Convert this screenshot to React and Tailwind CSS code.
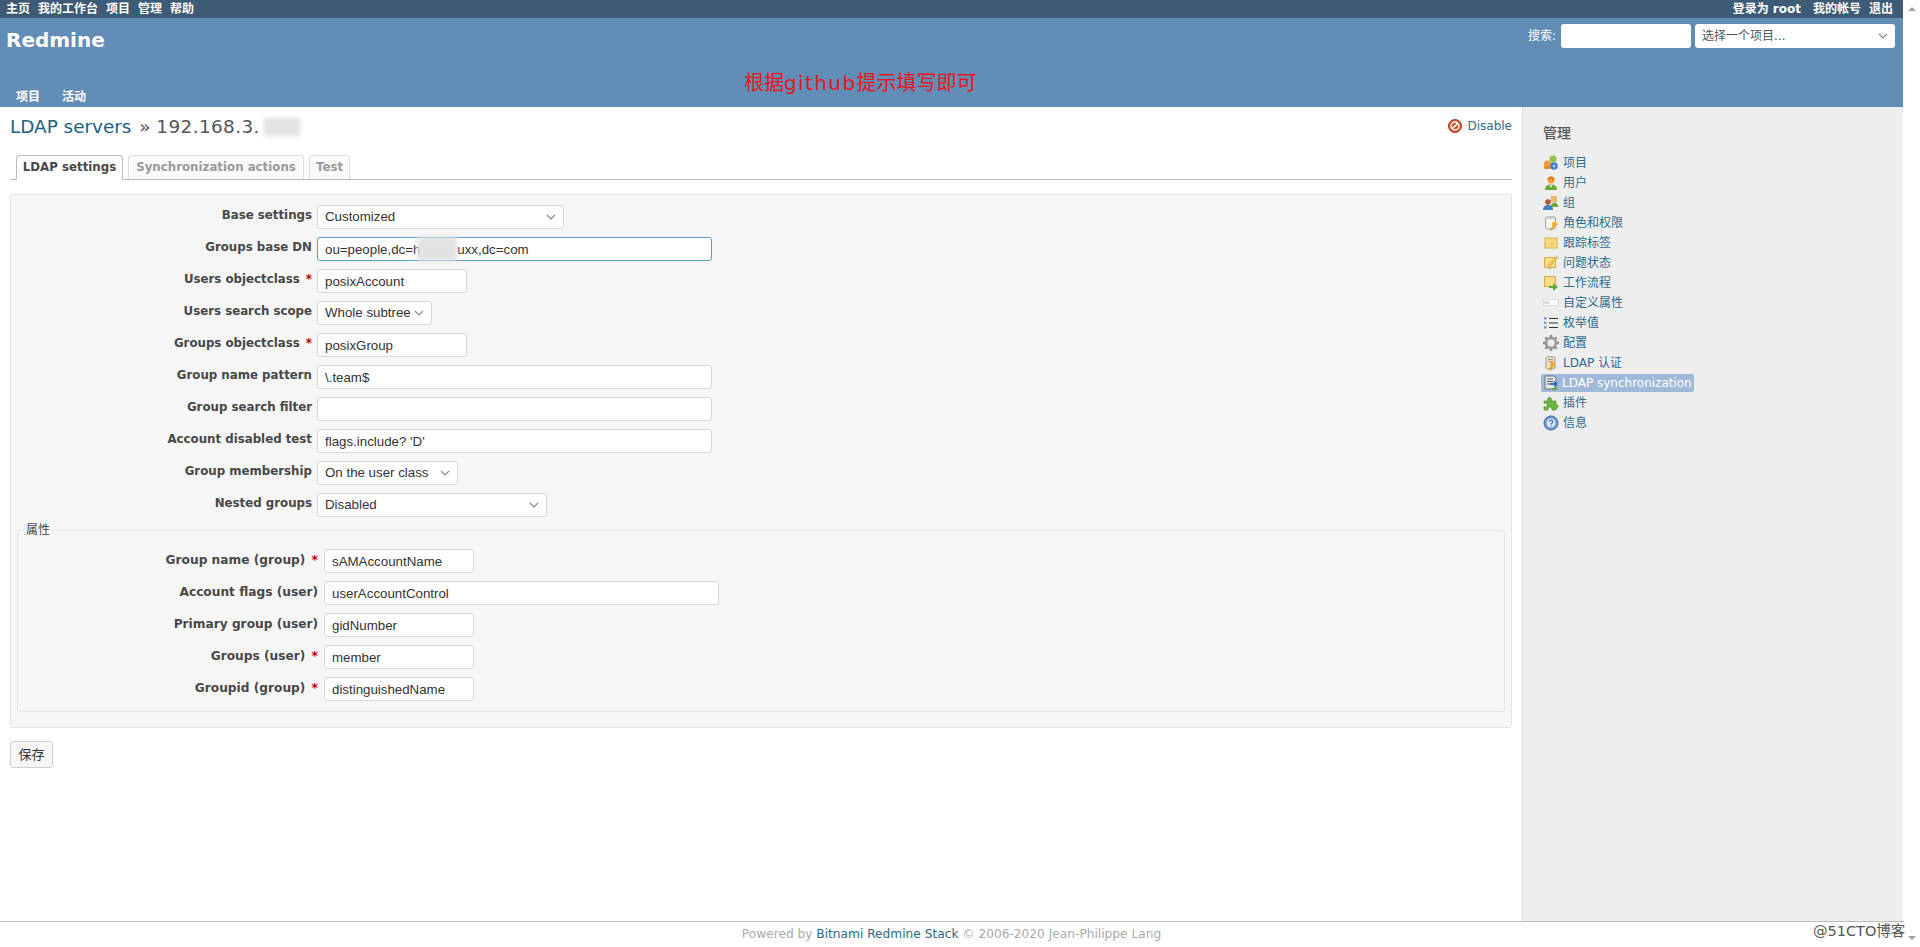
import React from "react";

const SANS = "font-['DejaVu_Sans','Noto_Sans_CJK_SC',sans-serif]";

const I = {
  project: (
    <>
      <circle cx="4.5" cy="9" r="3.6" fill="#ef9a3c" />
      <rect x="1" y="11" width="7" height="3" rx="1" fill="#e98a2a" />
      <circle cx="10" cy="4" r="3.6" fill="#8cc63f" />
      <circle cx="11" cy="11" r="3.8" fill="#3f7fd6" />
      <circle cx="11" cy="11" r="1.2" fill="#bcd6f5" />
    </>
  ),
  user: (
    <>
      <path d="M2 15c0-4 2.500-5.500 6-5.500s6 1.500 6 5.500z" fill="#6fa63a" />
      <path d="M6.500 10l1.500 3 1.500-3z" fill="#e8f3d6" />
      <circle cx="8" cy="5" r="3.500" fill="#f3a53c" />
      <path d="M4.500 5a3.500 3.500 0 0 1 7 0c-2 0-3-1-3.500-1.500C7.500 4 6.500 5 4.500 5z" fill="#d87a1c" />
    </>
  ),
  group: (
    <>
      <rect x="8" y="1" width="6" height="6" fill="#e8b66c" />
      <path d="M8 12c0-3 1.500-4.500 3.500-4.500S15 9 15 12z" fill="#6fa63a" />
      <circle cx="5" cy="7" r="2.800" fill="#b5532a" />
      <path d="M0 15c0-3.500 2-5 5-5s5 1.500 5 5z" fill="#3f7fc6" />
    </>
  ),
  role: (
    <>
      <path d="M2.500 2.500C2.500 1.500 12.500 1.500 12.500 2.500V13C12.500 14.500 2.500 14.500 2.500 13z" fill="#f4f4f4" stroke="#a5a5a5" />
      <ellipse cx="7.500" cy="3" rx="4.500" ry="1.200" fill="#cfcfcf" />
      <circle cx="11.500" cy="9" r="2.600" fill="#eeb135" />
      <path d="M10.500 10.500L6.500 15l2 .5 3.500-4z" fill="#e09e22" />
    </>
  ),
  tracker: (
    <>
      <rect x="2" y="3" width="12" height="10" fill="#f8dc84" stroke="#d8a94e" />
      <path d="M6 10l4-4M8 11l3-3" stroke="#eab84a" />
    </>
  ),
  status: (
    <>
      <rect x="1.500" y="2.500" width="11" height="10" fill="#f8dc84" stroke="#d8a94e" />
      <path d="M13.500 1.500l1.500 1.500-7 7-2.500 1 1-2.500z" fill="#f5c65d" stroke="#c99434" strokeWidth=".6" />
      <path d="M5 14l3-2.500 1.500 2z" fill="#e0a93f" />
    </>
  ),
  workflow: (
    <>
      <rect x="1.500" y="1.500" width="11" height="10" fill="#f8dc84" stroke="#d8a94e" />
      <path d="M6 11h4V8l5 4-5 4v-3H6z" fill="#5fa83a" />
    </>
  ),
  custom: (
    <>
      <rect x="0.500" y="4.500" width="15" height="6" fill="#fff" stroke="#d9d9d9" />
      <path d="M2 6v3M4 6v3M6 6v3" stroke="#bdbdbd" />
    </>
  ),
  enum: (
    <>
      <rect x="1" y="2" width="2.500" height="2.500" fill="#7e9cc4" />
      <rect x="1" y="6.500" width="2.500" height="2.500" fill="#7e9cc4" />
      <rect x="1" y="11" width="2.500" height="2.500" fill="#7e9cc4" />
      <path d="M6 3.500h9M6 8h9M6 12.500h9" stroke="#333" strokeWidth="1.200" />
    </>
  ),
  gear: (
    <>
      <circle cx="8" cy="8" r="5" fill="none" stroke="#a3a3a3" strokeWidth="3" />
      <path d="M8 0v3M8 13v3M0 8h3M13 8h3M2.300 2.300l2.200 2.200M11.500 11.500l2.200 2.200M13.700 2.300l-2.200 2.200M4.500 11.500l-2.200 2.200" stroke="#8f8f8f" strokeWidth="2.400" />
      <circle cx="8" cy="8" r="2.200" fill="#eee" />
    </>
  ),
  ldap: (
    <>
      <path d="M3 2.500C3 1.500 12 1.500 12 2.500V13C12 14.500 3 14.500 3 13z" fill="#e9e0c6" stroke="#a39a80" />
      <path d="M5 4.500h5M5 6.500h5" stroke="#999" />
      <circle cx="9.500" cy="9" r="2.600" fill="#eeb135" />
      <path d="M8.500 10.500L5.500 15l2 .5 3-4z" fill="#e09e22" />
    </>
  ),
  sync: (
    <>
      <path d="M2 1h9l2 2v11H2z" fill="#e7e7ea" stroke="#6b7480" />
      <path d="M4 4h6M4 6.500h6M4 9h3" stroke="#4e5a6a" />
      <path d="M7 8h4V5.500L15 9l-4 3.500V10H7z" fill="#2f6fb5" />
      <path d="M9 13h3v-1.500l3 2-3 2V15H9z" fill="#5fa83a" />
    </>
  ),
  plugin: (
    <path d="M1 6h3.500V4.500a2 2 0 1 1 4 0V6H13v3.500a2 2 0 1 1 0 4V15H9v-1a2 2 0 1 0-4 0v1H1v-3.500a2 2 0 1 0 0-3z" fill="#6db33f" stroke="#4e8a2a" strokeWidth=".6" />
  ),
  info: (
    <>
      <circle cx="8" cy="8" r="7" fill="#6f97d0" stroke="#46699f" />
      <circle cx="8" cy="8" r="4.500" fill="#dbe7f6" />
      <path d="M6.500 6.800a1.600 1.600 0 1 1 2.400 1.400c-.6.300-.9.600-.9 1.200M8 10.600v1" fill="none" stroke="#3f69a8" strokeWidth="1.200" />
    </>
  ),
};

const Icon = ({ name }) => (
  <svg viewBox="0 0 16 16" className="w-4 h-4 shrink-0">
    {I[name]}
  </svg>
);

const menu = [
  ["project", "项目"],
  ["user", "用户"],
  ["group", "组"],
  ["role", "角色和权限"],
  ["tracker", "跟踪标签"],
  ["status", "问题状态"],
  ["workflow", "工作流程"],
  ["custom", "自定义属性"],
  ["enum", "枚举值"],
  ["gear", "配置"],
  ["ldap", "LDAP 认证"],
  ["sync", "LDAP synchronization", true],
  ["plugin", "插件"],
  ["info", "信息"],
];

const Chevron = () => (
  <svg viewBox="0 0 10 6" className="w-[10px] h-[6px]">
    <path d="M1 1l4 4 4-4" fill="none" stroke="#8a8a8a" strokeWidth="1.200" />
  </svg>
);

const fieldCls =
  "h-[24px] border rounded-[3px] bg-white px-[7px] text-[13.3px] text-[#333] font-['Liberation_Sans','Noto_Sans_CJK_SC',sans-serif] outline-none";

const Select = ({ value, w }) => (
  <div className={`${w} relative`}>
    <select defaultValue={value} className={`${fieldCls} border-[#d7d7d7] w-full appearance-none`}>
      <option>{value}</option>
    </select>
    <span className="absolute right-[8px] top-[9px] flex pointer-events-none">
      <Chevron />
    </span>
  </div>
);

const Input = ({ value = "", w, focus }) => (
  <input
    readOnly
    defaultValue={value}
    className={`${fieldCls} ${w} ${focus ? "border-[#5a9fc6]" : "border-[#d7d7d7]"}`}
  />
);

const Row = ({ label, req, children, nested }) => (
  <div className="flex h-[32px] items-start">
    <label
      className={`h-[24px] shrink-0 text-right font-bold text-[#484848] ${
        nested ? "w-[300px] text-[12.2px] leading-[22px]" : "w-[301px] text-[11.8px] leading-[20px]"
      }`}
    >
      {label}
      {req && <span className="ml-[2px] text-[#bb0000]"> *</span>}
    </label>
    <div className={`relative ${nested ? "ml-[6px]" : "ml-[5px]"}`}>{children}</div>
  </div>
);

const Blur = ({ className }) => (
  <span className={`absolute bg-[#e2e2e2] blur-[2px] ${className}`} />
);

const Tab = ({ active, w, children }) => (
  <span
    className={`${w} flex items-center justify-center border rounded-t-[4px] text-[11.8px] font-bold ${
      active
        ? "h-[25px] bg-white border-[#bbb] border-b-white text-[#484848] relative top-[1px]"
        : "h-[24px] bg-[#fafafa] border-[#ddd] border-b-0 text-[#999]"
    }`}
  >
    {children}
  </span>
);

export default function App() {
  return (
    <div className={`${SANS} relative flex h-[947px] w-full overflow-hidden bg-white text-[12px] text-[#484848]`}>
      <div className="flex flex-col w-[1903px] h-full">
        <div className="flex h-[18px] shrink-0 items-center justify-between bg-[#3e5b76] px-[6px] pr-[10px] text-[12px] font-bold text-white">
          <div className="flex gap-[8px]">
            <span>主页</span>
            <span>我的工作台</span>
            <span>项目</span>
            <span>管理</span>
            <span>帮助</span>
          </div>
          <div className="flex">
            <span>
              登录为 <span>root</span>
            </span>
            <span className="ml-[12px]">我的帐号</span>
            <span className="ml-[8px]">退出</span>
          </div>
        </div>
        <header className="flex h-[89px] shrink-0 flex-col bg-[#628db6] text-white">
          <div className="flex h-[31px] items-start justify-between pl-[6px] pr-[8px]">
            <h1 className="mt-[7px] text-[20px] leading-[30px] font-bold">Redmine</h1>
            <div className="mt-[6px] flex items-center gap-[4px]">
              <span className="text-[12px]">搜索:</span>
              <input readOnly className="ml-[1px] h-[24px] w-[130px] rounded-[3px] bg-white outline-none" />
              <div className="relative flex h-[24px] w-[200px] items-center rounded-[3px] bg-white px-[7px] text-[12px] text-[#555]">
                选择一个项目...
                <span className="absolute right-[7px] top-[9px] flex">
                  <Chevron />
                </span>
              </div>
            </div>
          </div>
          <div className="relative flex flex-1 items-end">
            <div className="flex gap-[22px] pl-[16px] text-[12px] font-bold leading-[20px]">
              <span>项目</span>
              <span>活动</span>
            </div>
            <span className="absolute left-[744px] top-[20px] text-[20px] leading-[28px] text-[#e8141c]">
              根据<span className="tracking-[1.4px]">github</span>提示填写即可
            </span>
          </div>
        </header>
        <div className="flex min-h-0 flex-1">
          <main className="flex w-[1522px] shrink-0 flex-col pl-[10px] pr-[10px]">
            <div className="flex h-[49px] shrink-0 items-start justify-between">
              <h2 className="relative mt-[7px] text-[18.4px] font-medium leading-[26px] text-[#555]">
                <span className="text-[#1d6087]">LDAP servers</span>
                <span className="ml-[2px]"> » </span>
                <span className="tracking-[0.4px]">192.168.3.</span>
                <Blur className="left-[254px] top-[4px] h-[18px] w-[36px]" />
              </h2>
              <span className="mt-[10px] flex items-center gap-[4px] text-[#2a6a8e]">
                <svg viewBox="0 0 16 16" className="h-4 w-4">
                  <circle cx="8" cy="8" r="6.500" fill="#d9512c" stroke="#b03c1c" />
                  <circle cx="8" cy="8" r="4" fill="none" stroke="#fff" strokeWidth="1.400" />
                  <path d="M5.200 10.800l5.600-5.600" stroke="#fff" strokeWidth="1.600" />
                </svg>
                Disable
              </span>
            </div>
            <div className="flex h-[24px] shrink-0 items-end gap-[5px] border-b border-[#bbb] pl-[6px]">
              <Tab active w="w-[107px]">LDAP settings</Tab>
              <Tab w="w-[176px]">Synchronization actions</Tab>
              <Tab w="w-[41px]">Test</Tab>
            </div>
            <form className="mt-[14px] h-[534px] shrink-0 rounded-[3px] border border-[#e4e4e4] bg-[#f6f6f7] pt-[10px]">
              <Row label="Base settings"><Select value="Customized" w="w-[247px]" /></Row>
              <Row label="Groups base DN">
                <Input value="ou=people,dc=h          uxx,dc=com" w="w-[395px]" focus />
                <Blur className="left-[100px] top-0 h-[24px] w-[40px]" />
              </Row>
              <Row label="Users objectclass" req><Input value="posixAccount" w="w-[150px]" /></Row>
              <Row label="Users search scope"><Select value="Whole subtree" w="w-[115px]" /></Row>
              <Row label="Groups objectclass" req><Input value="posixGroup" w="w-[150px]" /></Row>
              <Row label="Group name pattern"><Input value="\.team$" w="w-[395px]" /></Row>
              <Row label="Group search filter"><Input w="w-[395px]" /></Row>
              <Row label="Account disabled test"><Input value="flags.include? 'D'" w="w-[395px]" /></Row>
              <Row label="Group membership"><Select value="On the user class" w="w-[141px]" /></Row>
              <Row label="Nested groups"><Select value="Disabled" w="w-[230px]" /></Row>
              <fieldset className="mx-[6px] mt-[-2px] h-[189px] rounded-[3px] border border-[#e4e4e4] pt-[12px]">
                <legend className="ml-[6px] px-[2px] text-[12px] leading-[14px]">属性</legend>
                <Row nested label="Group name (group)" req><Input value="sAMAccountName" w="w-[150px]" /></Row>
                <Row nested label="Account flags (user)"><Input value="userAccountControl" w="w-[395px]" /></Row>
                <Row nested label="Primary group (user)"><Input value="gidNumber" w="w-[150px]" /></Row>
                <Row nested label="Groups (user)" req><Input value="member" w="w-[150px]" /></Row>
                <Row nested label="Groupid (group)" req><Input value="distinguishedName" w="w-[150px]" /></Row>
              </fieldset>
            </form>
            <button className="mt-[13px] h-[27px] w-[43px] rounded-[3px] border border-[#cfcfcf] bg-[#f6f6f6] text-[13px] text-[#333]">
              保存
            </button>
          </main>
          <aside className="flex-1 border-l border-[#ddd] bg-[#eeeeee] pl-[18px]">
            <h3 className="mt-[16px] h-[30px] pl-[2px] text-[14px] font-medium leading-[20px] text-[#555]">管理</h3>
            <ul className="flex flex-col">
              {menu.map(([icon, label, sel]) => (
                <li key={label} className="flex h-[20px] items-center">
                  <span
                    className={`flex h-[18px] items-center rounded-[2px] pl-[2px] pr-[2px] ${
                      sel ? "gap-[3px] bg-[#a0b9d8] text-white" : "gap-[4px] text-[#2a6a8e]"
                    }`}
                  >
                    <Icon name={icon} />
                    {label}
                  </span>
                </li>
              ))}
            </ul>
          </aside>
        </div>
        <footer className="flex h-[26px] shrink-0 items-center justify-center border-t border-[#bbb] bg-white text-[12.2px] text-[#aaa]">
          <span>
            Powered by <span className="text-[#2a6a8e]">Bitnami Redmine Stack</span> © 2006-2020 Jean-Philippe Lang
          </span>
        </footer>
      </div>
      <div className="flex w-[17px] flex-col items-center justify-between bg-white py-[7px]">
        <span className="h-0 w-0 border-x-[4px] border-b-[4px] border-x-transparent border-b-[#a3a3a3]" />
        <span className="h-0 w-0 border-x-[4px] border-t-[4px] border-x-transparent border-t-[#a3a3a3]" />
      </div>
      <span className="absolute left-[1813px] top-[921px] text-[14.5px] leading-[20px] text-[#555]">@51CTO博客</span>
    </div>
  );
}
